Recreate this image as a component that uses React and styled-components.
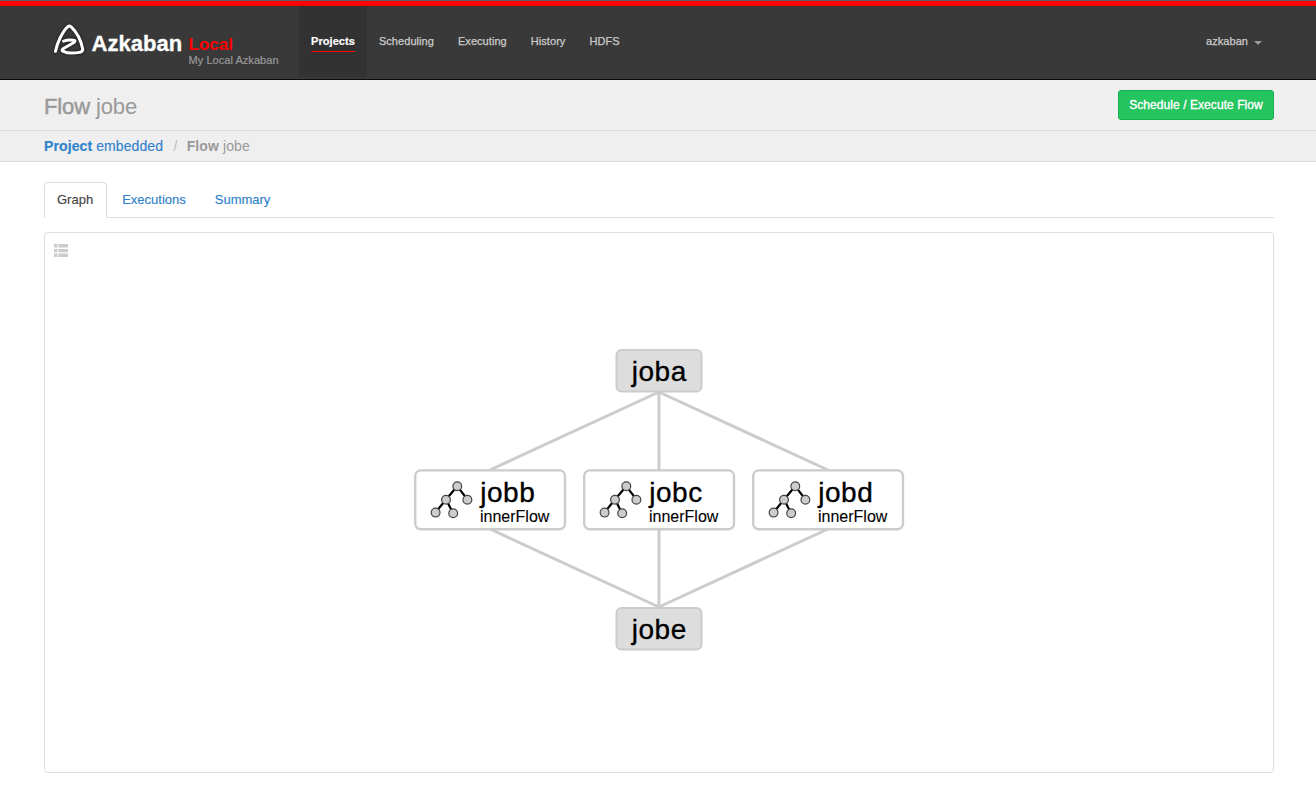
import React from "react";
import styled, { createGlobalStyle } from "styled-components";

const Global = createGlobalStyle`
  * { box-sizing: border-box; }
  body {
    margin: 0;
    background: #fff;
    color: #444;
    font-family: "Helvetica Neue", Helvetica, "Liberation Sans", Arial, sans-serif;
    font-size: 13px;
    line-height: 20px;
  }
`;

const Navbar = styled.header`
  display: flex;
  height: 80px;
  padding: 0 42px 0 44px;
  background:
    linear-gradient(#5a6068, #5a6068) 0 0 / 100% 1px no-repeat,
    linear-gradient(#ff0000, #ff0000) 0 1px / 100% 5px no-repeat,
    #393939;
  border-bottom: 1px solid #0c0c0c;
`;

const Brand = styled.div`
  display: flex;
  width: 255px;
  padding: 23px 0 0 9px;
`;

const Logo = styled.svg`
  display: block;
  flex: none;
  width: 32px;
  height: 32px;
  filter: drop-shadow(0 0 1.5px rgba(0, 0, 0, 0.7));
`;

const BrandName = styled.div`
  margin: 9px 0 0 6.5px;
  color: #fff;
  font-size: 22px;
  font-weight: bold;
  line-height: 24px;
  letter-spacing: 0.05px;
  -webkit-text-stroke: 0.3px #fff;
`;

const Instance = styled.div`
  margin: 11px 0 0 6.2px;
  white-space: nowrap;
`;

const InstanceName = styled.div`
  color: #ff0000;
  font-size: 17px;
  font-weight: bold;
  line-height: 22px;
`;

const InstanceLabel = styled.div`
  margin-top: -2px;
  color: #999;
  font-size: 11px;
  line-height: 12px;
  letter-spacing: 0.05px;
  -webkit-text-stroke: 0.2px #999;
`;

const Nav = styled.nav`
  display: flex;
  flex: 1;
  margin-top: 6px;
`;

const NavItem = styled.a`
  height: 71px;
  padding: 25px 12px 0;
  color: ${(p) => (p.$active ? "#fff" : "#ccc")};
  background: ${(p) => (p.$active ? "#323232" : "transparent")};
  font-size: 11px;
  font-weight: ${(p) => (p.$active ? "bold" : "normal")};
  letter-spacing: 0.06px;
  -webkit-text-stroke: ${(p) => (p.$active ? "0.2px #fff" : "0.25px #ccc")};
`;

const NavLabel = styled.span`
  display: block;
  height: 21px;
  border-bottom: ${(p) => (p.$active ? "1px solid #ff0000" : "0")};
`;

const UserMenu = styled(NavItem)`
  display: flex;
  margin-left: auto;
`;

const Caret = styled.i`
  margin: 10px 0 0 6px;
  width: 8px;
  height: 4px;
  border: 4px solid transparent;
  border-top-color: #999;
  border-bottom: 0;
`;

const TitleBar = styled.div`
  display: flex;
  justify-content: space-between;
  height: 51px;
  padding: 10px 42px 0 44px;
  background: #efefef;
  border-bottom: 1px solid #ddd;
`;

const Title = styled.h1`
  margin: 5px 0 0;
  color: #999;
  font-size: 22px;
  font-weight: normal;
  line-height: 24px;
  letter-spacing: -0.12px;
`;

const Strong = styled.span`
  -webkit-text-stroke: 0.5px #999;
`;

const ExecuteButton = styled.button`
  width: 156px;
  height: 30px;
  padding: 0;
  color: #fff;
  background: #24c45e;
  border: 1px solid #12b050;
  border-radius: 3px;
  font: 12px/18px "Liberation Sans", Arial, sans-serif;
  letter-spacing: 0.07px;
  -webkit-text-stroke: 0.35px #fff;
`;

const Breadcrumb = styled.div`
  display: flex;
  height: 31px;
  padding: 5px 44px 0;
  color: #999;
  background: #efefef;
  border-bottom: 1px solid #ddd;
  font-size: 14px;
  letter-spacing: 0.1px;
`;

const CrumbLink = styled.a`
  color: #2f82cc;
  -webkit-text-stroke: 0.15px #2f82cc;
`;

const Divider = styled.span`
  width: 23.5px;
  padding-left: 1px;
  text-align: center;
  color: #bbb;
`;

const Main = styled.main`
  padding: 20px 42px 22px 44px;
`;

const Tabs = styled.div`
  display: flex;
  gap: 2px;
  height: 36px;
  border-bottom: 1px solid #ddd;
`;

const Tab = styled.a`
  height: ${(p) => (p.$active ? "36px" : "35px")};
  padding: 7px 13px 0 12px;
  color: ${(p) => (p.$active ? "#444" : "#2f82cc")};
  background: #fff;
  border: 1px solid ${(p) => (p.$active ? "#ddd" : "transparent")};
  border-bottom: 0;
  border-radius: 4px 4px 0 0;
  -webkit-text-stroke: 0.15px;
`;

const GraphPanel = styled.section`
  margin-top: 14px;
  width: 1230px;
  height: 541px;
  border: 1px solid #ddd;
  border-radius: 4px;
`;

const Graph = styled.svg`
  display: block;
  width: 1228px;
  height: 539px;
  font-family: "Liberation Sans", Arial, sans-serif;
`;

const NodeLabel = styled.text`
  font-size: 28px;
  letter-spacing: 0.5px;
  stroke: #000;
  stroke-width: 0.35px;
`;

const FlowLabel = styled.text`
  font-size: 16px;
  stroke: #000;
  stroke-width: 0.1px;
`;

const EDGES = [
  [658.9, 392, 490, 470],
  [658.9, 392, 659, 470],
  [658.9, 392, 828, 470],
  [490, 529, 658.9, 607],
  [659, 529, 658.9, 607],
  [828, 529, 658.9, 607],
];

function JobNode({ y, label }) {
  return (
    <g transform={`translate(616 ${y})`}>
      <rect x="0.5" y="0.75" width="85" height="41.5" rx="5" fill="#ddd" stroke="#ccc" strokeWidth="2" />
      <NodeLabel x="43.3" y="32" textAnchor="middle">{label}</NodeLabel>
    </g>
  );
}

function FlowNode({ x, label }) {
  return (
    <g transform={`translate(${x} 469)`}>
      <rect x="1.2" y="1.4" width="149.8" height="58.8" rx="5.5" fill="#fff" stroke="#ccc" strokeWidth="2.4" />
      <path d="M21.5 43.5 32 30.5 43.2 17.2 53.5 30.5M32 30.5 39 44" fill="none" stroke="#000" strokeWidth="2.2" />
      <g fill="#ccc" stroke="#444" strokeWidth="1.2">
        <circle cx="43.3" cy="17.3" r="4.4" />
        <circle cx="32" cy="30.7" r="4.4" />
        <circle cx="53.4" cy="30.7" r="4.4" />
        <circle cx="21.6" cy="43.6" r="4.4" />
        <circle cx="39.2" cy="44.2" r="4.4" />
      </g>
      <NodeLabel x="66.3" y="32.5">{label}</NodeLabel>
      <FlowLabel x="66" y="53">innerFlow</FlowLabel>
    </g>
  );
}

export default function App() {
  return (
    <>
      <Global />
      <Navbar>
        <Brand>
          <Logo viewBox="0 0 32 32" fill="none" stroke="#fff" strokeLinecap="round" strokeLinejoin="round">
            <path d="M2.5 28.3C3.9 20 9.6 8.5 14.6 3.9Q16.4 2.4 18.2 3.9C23.6 9 28.2 18.3 29.7 26C30 28.4 28.6 29 26.5 29.4C20.5 30.5 13.5 30 9.8 28.1C8.4 27.1 9.4 26.1 10.9 25.2L20.9 19.5C22.6 18.2 22.2 17.4 20.5 17.2C17.3 16.7 13.5 17.1 10.6 18.2" strokeWidth="3" />
          </Logo>
          <BrandName>Azkaban</BrandName>
          <Instance>
            <InstanceName>Local</InstanceName>
            <InstanceLabel>My Local Azkaban</InstanceLabel>
          </Instance>
        </Brand>
        <Nav>
          <NavItem $active><NavLabel $active>Projects</NavLabel></NavItem>
          <NavItem>Scheduling</NavItem>
          <NavItem>Executing</NavItem>
          <NavItem>History</NavItem>
          <NavItem>HDFS</NavItem>
          <UserMenu>azkaban<Caret /></UserMenu>
        </Nav>
      </Navbar>
      <TitleBar>
        <Title><Strong>Flow</Strong> jobe</Title>
        <ExecuteButton>Schedule / Execute Flow</ExecuteButton>
      </TitleBar>
      <Breadcrumb>
        <CrumbLink><b>Project</b> embedded</CrumbLink>
        <Divider>/</Divider>
        <span><b>Flow</b> jobe</span>
      </Breadcrumb>
      <Main>
        <Tabs>
          <Tab $active>Graph</Tab>
          <Tab>Executions</Tab>
          <Tab>Summary</Tab>
        </Tabs>
        <GraphPanel>
          <Graph viewBox="45 233 1228 539">
            <path d="M54 244h3.5v3.5H54zM58.5 244H68v3.5h-9.5zM54 249h3.5v3.2H54zM58.5 249H68v3.2h-9.5zM54 253.6h3.5v3.4H54zM58.5 253.6H68v3.4h-9.5z" fill="#ccc" />
            <g stroke="#ccc" strokeWidth="3">
              {EDGES.map(([x1, y1, x2, y2], i) => (
                <line key={i} x1={x1} y1={y1} x2={x2} y2={y2} />
              ))}
            </g>
            <JobNode y={349.3} label="joba" />
            <FlowNode x={414} label="jobb" />
            <FlowNode x={583} label="jobc" />
            <FlowNode x={752} label="jobd" />
            <JobNode y={607.2} label="jobe" />
          </Graph>
        </GraphPanel>
      </Main>
    </>
  );
}
